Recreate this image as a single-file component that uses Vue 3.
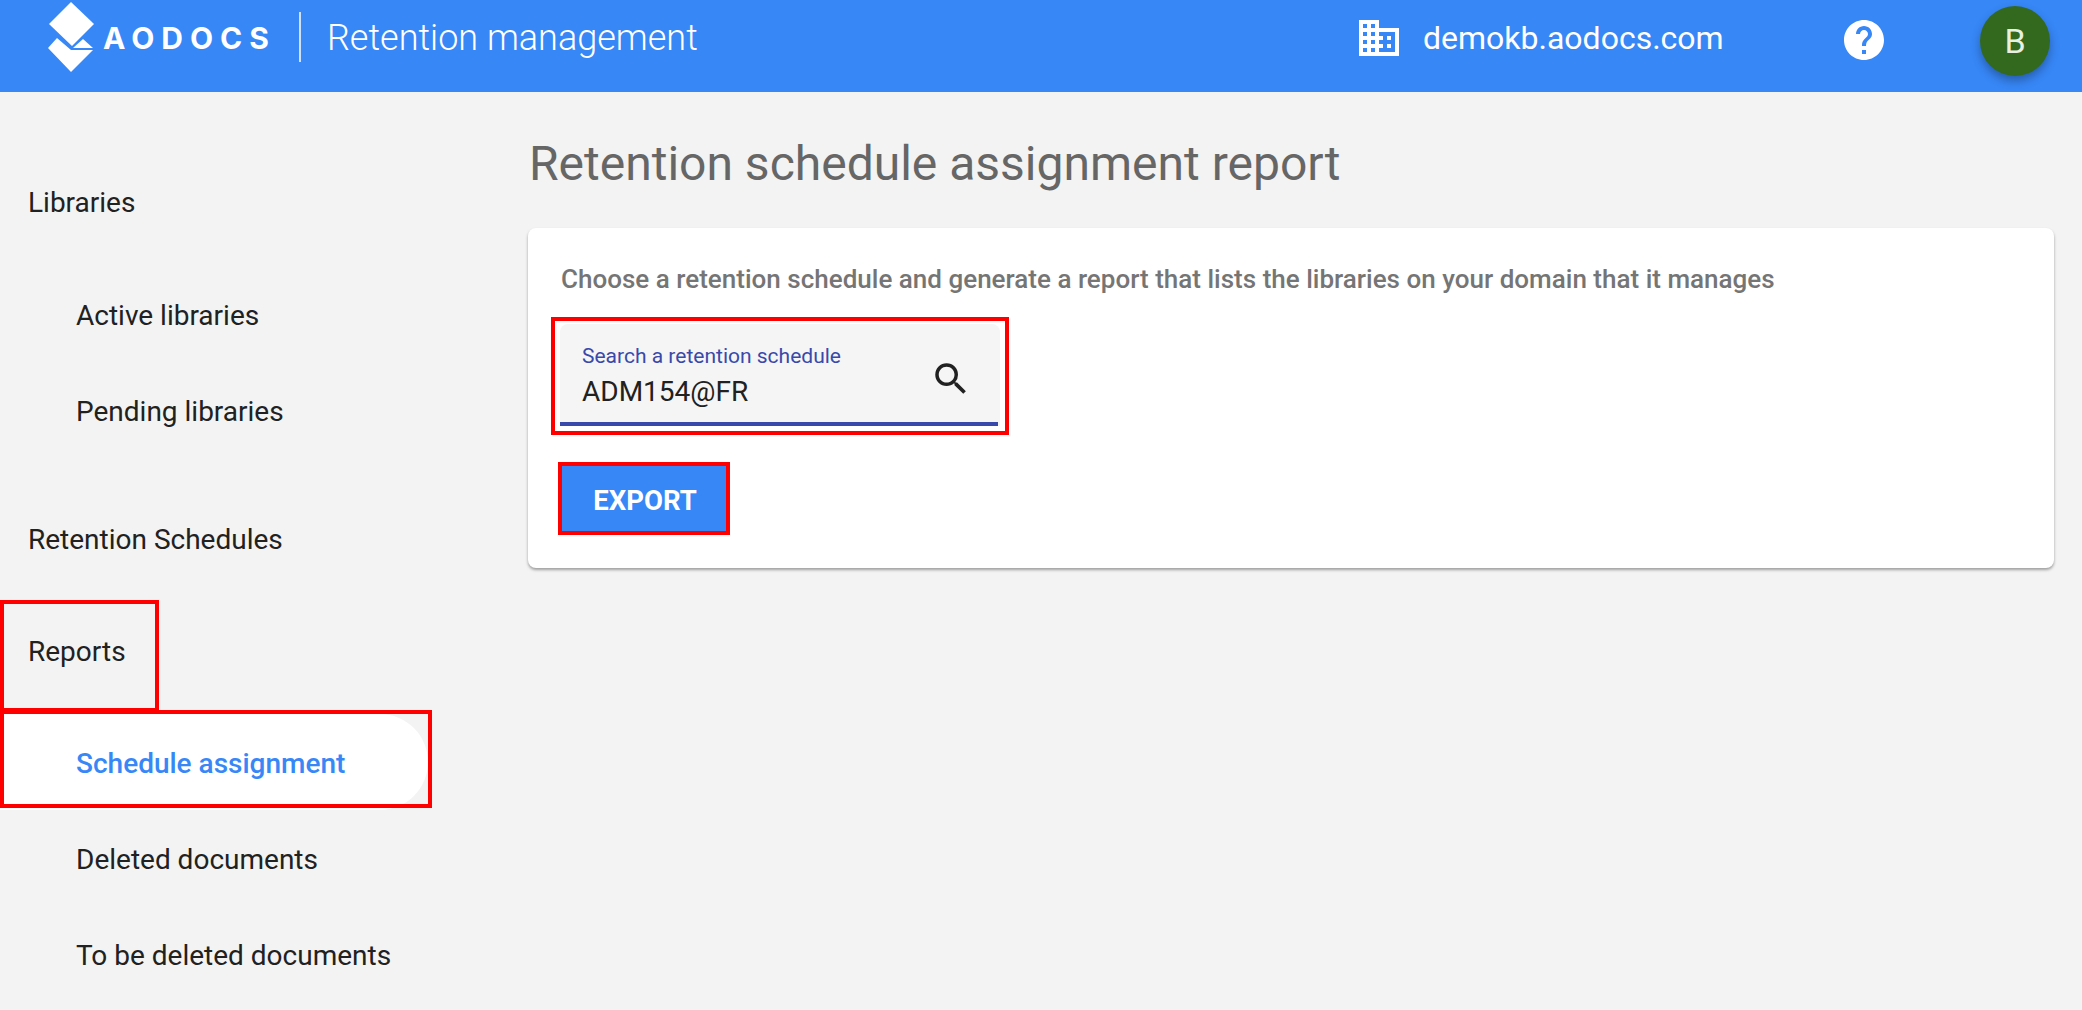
<script setup>
const libs = ['Active libraries', 'Pending libraries']
const reports = [
  { label: 'Schedule assignment', active: true },
  { label: 'Deleted documents' },
  { label: 'To be deleted documents' }
]
</script>

<template>
  <div class="page">
    <header class="bar">
      <div class="brand">
        <svg class="logo" width="48" height="72" viewBox="0 0 48 72" fill="#fff">
          <path d="M24 2 47 24 25 46 2 24Z" />
          <path d="M1 48 10 38 24 50H46L24 72Z" />
          <path d="M36 39 46 48H26Z" />
        </svg>
        <span class="word">AODOCS</span>
      </div>
      <span class="rule"></span>
      <span class="app">Retention management</span>
      <div class="right">
        <svg class="building" width="48" height="48" viewBox="0 0 24 24" fill="#fff">
          <path d="M12 7V3H2v18h20V7H12zM6 19H4v-2h2v2zm0-4H4v-2h2v2zm0-4H4V9h2v2zm0-4H4V5h2v2zm4 12H8v-2h2v2zm0-4H8v-2h2v2zm0-4H8V9h2v2zm0-4H8V5h2v2zm10 12h-8v-2h2v-2h-2v-2h2v-2h-2V9h8v10zm-2-8h-2v2h2v-2zm0 4h-2v2h2v-2z" />
        </svg>
        <span class="domain">demokb.aodocs.com</span>
        <svg class="help" width="48" height="48" viewBox="0 0 24 24" fill="#fff">
          <path d="M12 2C6.48 2 2 6.48 2 12s4.48 10 10 10 10-4.48 10-10S17.52 2 12 2zm1 17h-2v-2h2v2zm2.07-7.75l-.9.92C13.45 12.9 13 13.5 13 15h-2v-.5c0-1.1.45-2.1 1.17-2.83l1.24-1.26c.37-.36.59-.86.59-1.41 0-1.1-.9-2-2-2s-2 .9-2 2H8c0-2.21 1.79-4 4-4s4 1.79 4 4c0 .88-.36 1.68-.93 2.25z" />
        </svg>
        <div class="avatar">B</div>
      </div>
    </header>
    <div class="body">
      <nav class="side">
        <div class="top first">Libraries</div>
        <div class="sub">
          <div v-for="l in libs" :key="l" class="item">{{ l }}</div>
        </div>
        <div class="top">Retention Schedules</div>
        <div class="top reports">Reports<span class="mark mark-reports"></span></div>
        <div class="sub sub-last">
          <div v-for="r in reports" :key="r.label" class="item" :class="{ active: r.active }">
            {{ r.label }}
            <span v-if="r.active" class="mark mark-active"></span>
          </div>
        </div>
      </nav>
      <main class="main">
        <h1 class="title">Retention schedule assignment report</h1>
        <section class="card">
          <p class="lead">Choose a retention schedule and generate a report that lists the libraries on your domain that it manages</p>
          <div class="field">
            <span class="mark mark-field"></span>
            <div class="field-text">
              <label class="label">Search a retention schedule</label>
              <div class="value">ADM154@FR</div>
            </div>
            <svg class="search" width="42" height="42" viewBox="0 0 24 24" fill="#212121">
              <path d="M15.5 14h-.79l-.28-.27A6.47 6.47 0 0 0 16 9.5 6.5 6.5 0 1 0 9.5 16c1.61 0 3.09-.59 4.23-1.57l.27.28v.79l5 4.99L20.49 19l-4.99-5zm-6 0C7.01 14 5 11.99 5 9.5S7.01 5 9.5 5 14 7.01 14 9.5 11.99 14 9.5 14z" />
            </svg>
          </div>
          <button class="export">EXPORT</button>
        </section>
      </main>
    </div>
  </div>
</template>

<style>
html, body { margin: 0; background: #f3f3f3; }
</style>

<style scoped>
.page { width: 2082px; height: 1010px; overflow: hidden; background: #f3f3f3; font-family: Roboto, sans-serif; color: #212121; }
.bar { height: 92px; background: #3787f7; display: flex; align-items: flex-start; color: #fff; box-sizing: border-box; padding-left: 47px; position: relative; z-index: 1; }
.brand { display: flex; align-items: flex-start; width: 252px; flex: none; }
.logo { flex: none; }
.word { font-family: Inter, Roboto, sans-serif; font-weight: 700; font-size: 30px; letter-spacing: 7px; line-height: 40px; margin: 18px 0 0 8px; }
.rule { width: 2px; height: 50px; margin: 12px 0 0; background: #cfe0fb; flex: none; }
.app { font-weight: 300; font-size: 36px; line-height: 42px; margin: 17px 0 0 26px; }
.right { margin-left: auto; display: flex; align-items: flex-start; }
.building { margin: 14px 0 0; flex: none; }
.domain { font-size: 32px; line-height: 38px; margin: 19px 0 0 20px; width: 417px; flex: none; }
.help { margin: 16px 0 0; flex: none; }
.avatar { width: 70px; height: 70px; border-radius: 50%; background: #33691e; margin: 6px 32px 0 92px; display: flex; align-items: center; justify-content: center; font-size: 34px; color: #e8f0e2; box-shadow: 0 5px 10px rgba(0,0,0,.3); flex: none; }
.body { display: flex; }
.side { width: 528px; flex: none; padding-top: 62px; box-sizing: border-box; }
.top, .item { height: 96px; padding-top: 2px; display: flex; align-items: center; font-size: 28px; position: relative; box-sizing: border-box; }
.top { padding-left: 28px; }
.top.first { padding-top: 0; }
.item { padding-left: 76px; width: 428px; }
.sub { margin: 16px 0 32px; }
.sub-last { margin-bottom: 0; }
.reports { margin-top: 16px; }
.active { background: #fff; color: #3787f7; font-weight: 500; border-radius: 0 48px 48px 0; }
.mark { position: absolute; border: 4px solid #f00; box-sizing: border-box; pointer-events: none; }
.mark-reports { left: 0; top: -2px; width: 159px; height: 112px; }
.mark-active { left: 0; top: -4px; width: 432px; height: 98px; }
.mark-field { left: -9px; top: -7px; width: 458px; height: 118px; }
.main { flex: 1; padding: 0 28px 0 0; }
.title { font-weight: 400; font-size: 48px; line-height: 56px; color: #666; margin: 44px 0 0 1px; }
.card { margin-top: 36px; height: 340px; background: #fff; border-radius: 8px; box-shadow: 0 2px 3px rgba(0,0,0,.35); box-sizing: border-box; padding: 36px 0 0 33px; }
.lead { margin: 0; font-size: 26px; font-weight: 500; color: #757575; line-height: 30px; letter-spacing: .01px; }
.field { position: relative; margin: 30px 0 0 -1px; width: 440px; height: 102px; background: #f5f5f5; border-radius: 8px 8px 0 0; box-sizing: border-box; display: flex; justify-content: space-between; padding: 0 28px 0 22px; }
.field::after { content: ""; position: absolute; left: 0; bottom: 0; width: 438px; height: 4px; background: #3949ab; }
.field-text { padding-top: 19px; }
.label { display: block; font-size: 21px; line-height: 26px; color: #3949ab; }
.value { font-size: 28px; line-height: 36px; margin-top: 5px; color: #212121; }
.search { margin-top: 34px; flex: none; }
.export { display: block; margin: 40px 0 0 1px; width: 164px; height: 65px; background: #3787f7; color: #fff; font: 700 27.5px Roboto, sans-serif; border: 0; padding: 3px 0 0 2px; outline: 4px solid #f00; }
</style>
